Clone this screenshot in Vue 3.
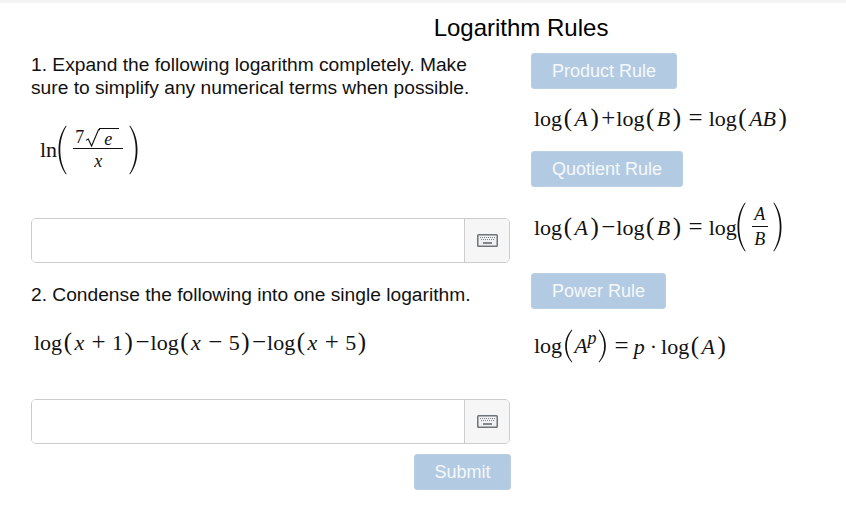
<template>
  <div class="page">
    <div class="top-strip"></div>
    <h1 class="title">Logarithm Rules</h1>
    <div class="columns">
      <div class="left">
        <p class="question first-question">1. Expand the following logarithm completely. Make sure to simplify any numerical terms when possible.</p>
        <div class="math first-math">
          <span class="fn ln">ln</span>
          <svg class="big-paren" viewBox="0 0 10 50"><path d="M9 .5C3.500 8 1.500 16 1.500 25S3.500 42 9 49.500L9.600 49C5 41.500 3.300 33.500 3.300 25S5 8.500 9.600 1Z" /></svg>
          <span class="frac frac-root">
            <span class="num">
              <span class="seven">7</span>
              <svg class="radical" viewBox="0 0 16 20"><path d="M1 12l2.500-1.500L7 18 14.500 .5H16" fill="none" stroke="#111" stroke-width="1.200" /></svg>
              <i class="radicand">e</i>
            </span>
            <span class="den"><i>x</i></span>
          </span>
          <svg class="big-paren" viewBox="0 0 10 50"><path d="M1 .5C6.500 8 8.500 16 8.500 25S6.500 42 1 49.500L.4 49C5 41.500 6.700 33.500 6.700 25S5 8.500 .4 1Z" /></svg>
        </div>
        <div class="answer first-answer">
          <div class="field"></div>
          <div class="addon">
            <svg class="kbd" viewBox="0 0 21 13">
              <rect x=".75" y=".75" width="19.500" height="11.500" rx=".8" fill="#eef0f2" stroke="#6f7479" stroke-width="1.500" />
              <path d="M3 3.500h15M4 5.500h13" stroke="#7d8287" stroke-width="1" stroke-dasharray="1 1" />
              <path d="M6 9h9" stroke="#5f6469" stroke-width="1.500" />
            </svg>
          </div>
        </div>
        <p class="question second-question">2. Condense the following into one single logarithm.</p>
        <div class="math second-math">
          <span class="fn">log</span><span class="p">(</span><i class="var">x</i><span class="op">+</span><span>1</span><span class="p">)</span><span class="minus">−</span><span class="fn">log</span><span class="p">(</span><i class="var">x</i><span class="op">−</span><span>5</span><span class="p">)</span><span class="minus">−</span><span class="fn">log</span><span class="p">(</span><i class="var">x</i><span class="op">+</span><span>5</span><span class="p">)</span>
        </div>
        <div class="answer">
          <div class="field"></div>
          <div class="addon">
            <svg class="kbd" viewBox="0 0 21 13">
              <rect x=".75" y=".75" width="19.500" height="11.500" rx=".8" fill="#eef0f2" stroke="#6f7479" stroke-width="1.500" />
              <path d="M3 3.500h15M4 5.500h13" stroke="#7d8287" stroke-width="1" stroke-dasharray="1 1" />
              <path d="M6 9h9" stroke="#5f6469" stroke-width="1.500" />
            </svg>
          </div>
        </div>
        <div class="submit-row">
          <button class="btn submit">Submit</button>
        </div>
      </div>
      <div class="right">
        <button class="btn product">Product Rule</button>
        <div class="math rule-one">
          <span class="fn">log</span><span class="p">(</span><i class="var">A</i><span class="p">)</span><span class="minus">+</span><span class="fn">log</span><span class="p">(</span><i class="var">B</i><span class="p">)</span><span class="eq">=</span><span class="fn">log</span><span class="p">(</span><i class="var">AB</i><span class="p">)</span>
        </div>
        <button class="btn quotient">Quotient Rule</button>
        <div class="math rule-two">
          <span class="run">
            <span class="fn">log</span><span class="p">(</span><i class="var">A</i><span class="p">)</span><span class="minus">−</span><span class="fn">log</span><span class="p">(</span><i class="var">B</i><span class="p">)</span><span class="eq">=</span><span class="fn">log</span>
          </span>
          <svg class="big-paren" viewBox="0 0 10 50"><path d="M9 .5C3.500 8 1.500 16 1.500 25S3.500 42 9 49.500L9.600 49C5 41.500 3.300 33.500 3.300 25S5 8.500 9.600 1Z" /></svg>
          <span class="frac frac-ab">
            <span class="num"><i>A</i></span>
            <span class="den"><i>B</i></span>
          </span>
          <svg class="big-paren" viewBox="0 0 10 50"><path d="M1 .5C6.500 8 8.500 16 8.500 25S6.500 42 1 49.500L.4 49C5 41.500 6.700 33.500 6.700 25S5 8.500 .4 1Z" /></svg>
        </div>
        <button class="btn power">Power Rule</button>
        <div class="math rule-three">
          <span class="run"><span class="fn">log</span></span>
          <svg class="mid-paren" viewBox="0 0 10 36"><path d="M9 .5C4 6 2 12 2 18S4 30 9 35.500L9.600 35C5.500 29.500 3.800 24 3.800 18S5.500 6.500 9.600 1Z" /></svg>
          <span class="run">
            <i class="var base">A</i><i class="sup">p</i>
          </span>
          <svg class="mid-paren" viewBox="0 0 10 36"><path d="M1 .5C6 6 8 12 8 18S6 30 1 35.500L.4 35C4.500 29.500 6.200 24 6.200 18S4.500 6.500 .4 1Z" /></svg>
          <span class="run">
            <span class="eq tight">=</span><i class="var">p</i><span class="dot">·</span><span class="fn">log</span><span class="p">(</span><i class="var">A</i><span class="p">)</span>
          </span>
        </div>
      </div>
    </div>
  </div>
</template>

<script setup>
</script>

<style>
body {
  margin: 0;
  background: #fff;
}
</style>

<style scoped>
.page {
  width: 846px;
  height: 530px;
  overflow: hidden;
  font-family: "Liberation Sans", Arial, sans-serif;
  color: #111;
}

.top-strip {
  height: 3px;
  background: #f3f3f3;
}

.title {
  margin: 0;
  padding: 9px 0 0 196px;
  height: 31px;
  line-height: 31px;
  text-align: center;
  font-size: 24px;
  font-weight: 400;
  color: #000;
}

.columns {
  display: grid;
  grid-template-columns: 479px 315px;
  column-gap: 21px;
  padding: 10px 0 0 31px;
}

.question {
  margin: 0;
  font-size: 19.2px;
  line-height: 23px;
}

.first-question {
  max-width: 445px;
}

.math {
  display: flex;
  align-items: baseline;
  font-family: "Liberation Serif", "Times New Roman", serif;
  font-size: 22px;
  color: #111;
  white-space: nowrap;
}

.math i {
  font-style: italic;
}

.run {
  display: flex;
  align-items: baseline;
}

.first-math {
  height: 50px;
  align-items: center;
  margin: 26px 0 0 9px;
}

.big-paren {
  width: 10px;
  height: 50px;
  flex: none;
  fill: #111;
  align-self: center;
}

.rule-two .big-paren {
  margin-left: -1px;
}

.mid-paren {
  width: 10px;
  height: 34px;
  flex: none;
  fill: #111;
  align-self: center;
  margin-left: 1px;
}

.frac {
  display: inline-flex;
  flex-direction: column;
  align-items: center;
  align-self: center;
  font-size: 18px;
}

.frac-root {
  width: 50px;
  margin: 0 6px;
}

.frac-root .num {
  display: flex;
  align-items: flex-end;
  width: 100%;
  height: 22px;
  padding-left: 2px;
  box-sizing: border-box;
  line-height: 22px;
  border-bottom: 1px solid #111;
}

.seven {
  margin-right: 1px;
}

.radical {
  width: 15px;
  height: 19px;
  flex: none;
}

.radicand {
  width: 20px;
  margin-left: -1px;
  padding-left: 5px;
  box-sizing: border-box;
  height: 20px;
  line-height: 20px;
  border-top: 1px solid #111;
}

.den {
  line-height: 24px;
}

.frac-ab {
  width: 16px;
  margin: 0 6px;
}

.frac-ab .num {
  width: 100%;
  text-align: center;
  height: 23px;
  line-height: 23px;
  border-bottom: 1px solid #111;
}

.answer {
  display: flex;
  height: 45px;
  box-sizing: border-box;
  border: 1px solid #ccc;
  border-radius: 5px;
  overflow: hidden;
}

.first-answer {
  margin-top: 43px;
}

.field {
  flex: 1;
  background: #fff;
}

.addon {
  width: 44px;
  display: flex;
  align-items: center;
  justify-content: center;
  background: #f6f6f6;
  border-left: 1px solid #ccc;
}

.kbd {
  width: 21px;
  height: 13px;
}

.second-question {
  margin-top: 20px;
}

.second-math {
  height: 30px;
  margin: 21px 0 0 3px;
}

.second-math + .answer {
  margin-top: 42px;
}

.p {
  font-size: 25px;
  margin: 0 1.500px;
  line-height: 30px;
}

.var {
  margin: 0 1px;
}

.op {
  font-size: 25px;
  margin: 0 6.400px;
}

.minus {
  font-size: 25px;
  margin: 0 1px;
}

.eq {
  font-size: 25px;
  margin: 0 6px;
}

.eq.tight {
  margin: 0 4px 0 7px;
}

.dot {
  margin: 0 4px;
}

.base {
  margin-right: 0;
}

.sup {
  font-size: 18px;
  margin: 0;
  position: relative;
  top: -9px;
}

.submit-row {
  display: flex;
  justify-content: flex-end;
  margin: 10px -1px 0 0;
}

.btn {
  display: block;
  height: 36px;
  padding: 0;
  border: 1px solid #b9cfe4;
  border-radius: 3px;
  background: #b3cbe2;
  color: #f5f8fb;
  font-family: "Liberation Sans", Arial, sans-serif;
  font-size: 18px;
}

.product {
  width: 146px;
}

.quotient {
  width: 152px;
}

.power {
  width: 135px;
}

.submit {
  width: 97px;
}

.rule-one {
  height: 30px;
  margin: 14px 0 18px 3px;
}

.rule-two {
  height: 50px;
  align-items: center;
  margin: 15px 0 21px 3px;
}

.rule-three {
  height: 36px;
  align-items: center;
  margin: 19px 0 0 3px;
}
</style>
